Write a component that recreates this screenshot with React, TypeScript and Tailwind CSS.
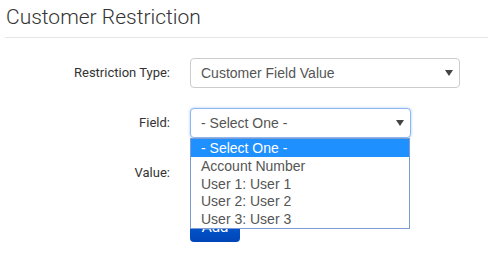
const options = ['- Select One -', 'Account Number', 'User 1: User 1', 'User 2: User 2', 'User 3: User 3']

function Caret() {
  return (
    <svg width="8" height="6" viewBox="0 0 8 6" className="shrink-0">
      <path d="M0 0 L8 0 L4 6 Z" fill="#444" />
    </svg>
  )
}

function FakeSelect({ value, focused, width }: { value: string; focused?: boolean; width: string }) {
  return (
    <div
      className={`flex h-[30px] items-center justify-between rounded-[4px] border bg-white pl-[10px] pr-[6px] ${width} ${
        focused ? 'border-[#8fb5ef] shadow-[0_0_3px_rgba(102,175,233,0.6)]' : 'border-[#cccccc]'
      }`}
    >
      <span className="text-[14px] text-[#555]" style={{ fontFamily: '"Liberation Sans", Arial, sans-serif' }}>
        {value}
      </span>
      <Caret />
    </div>
  )
}

export default function App() {
  return (
    <div className="h-[263px] w-[488px] bg-white" style={{ fontFamily: 'Roboto, "Open Sans", sans-serif' }}>
      <div className="ml-[5px] border-b border-[#e5e5e5] pb-[6px] pt-[3px]">
        <h1 className="pl-[1px] text-[21px] font-light leading-[28px] text-[#333]">Customer Restriction</h1>
      </div>

      <div className="mt-[20px] flex flex-col gap-[20px]">
        <div className="flex items-center gap-[20px]">
          <label className="w-[170px] text-right text-[13px] text-[#333]">Restriction Type:</label>
          <FakeSelect value="Customer Field Value" width="w-[270px]" />
        </div>

        <div className="relative flex items-center gap-[20px]">
          <label className="w-[170px] text-right text-[13px] text-[#333]">Field:</label>
          <FakeSelect value="- Select One -" width="w-[221px]" focused />
          <ul
            className="absolute left-[190px] top-[30px] z-10 w-[220px] border border-[#7a9cd3] bg-white"
            style={{ fontFamily: '"Liberation Sans", Arial, sans-serif' }}
          >
            {options.map((o, i) => (
              <li
                key={o}
                className={`h-[17.8px] pl-[10px] text-[14px] leading-[18px] ${
                  i === 0 ? 'bg-[#1e90ff] text-white' : 'text-[#555]'
                }`}
              >
                {o}
              </li>
            ))}
          </ul>
        </div>

        <div className="flex h-[30px] items-center gap-[20px]">
          <label className="w-[170px] text-right text-[13px] text-[#333]">Value:</label>
        </div>
      </div>

      <div className="ml-[190px] mt-[24px]">
        <button
          className="h-[30px] w-[50px] rounded-[4px] bg-gradient-to-b from-[#0a62dc] to-[#0045b8] text-[15px] text-white"
          style={{ fontFamily: '"Liberation Sans", Arial, sans-serif' }}
        >
          Add
        </button>
      </div>
    </div>
  )
}
